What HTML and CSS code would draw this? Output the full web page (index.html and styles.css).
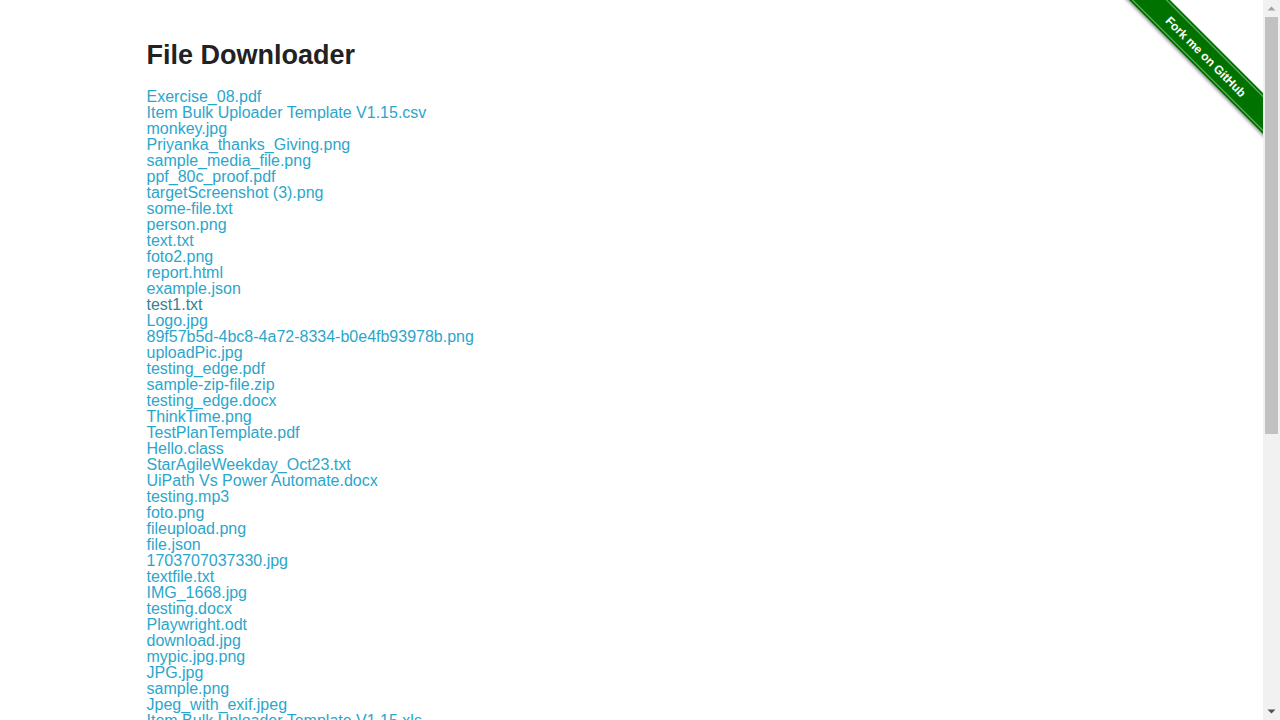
FILE: index.html
```html
<!DOCTYPE html>
<html lang="en">
<head>
<meta charset="utf-8">
<title>The Internet</title>
<link rel="stylesheet" href="styles.css">
</head>
<body>
<div class="page">
  <a class="ribbon-wrap" href="#"><span class="ribbon"><span class="ribbon-text">Fork me on GitHub</span></span></a>
  <div class="row">
    <div class="column">
      <h3 class="title">File Downloader</h3>
      <div class="files">
        <a href="#">Exercise_08.pdf</a>
        <a href="#">Item Bulk Uploader Template V1.15.csv</a>
        <a href="#">monkey.jpg</a>
        <a href="#">Priyanka_thanks_Giving.png</a>
        <a href="#">sample_media_file.png</a>
        <a href="#">ppf_80c_proof.pdf</a>
        <a href="#">targetScreenshot (3).png</a>
        <a href="#">some-file.txt</a>
        <a href="#">person.png</a>
        <a href="#">text.txt</a>
        <a href="#">foto2.png</a>
        <a href="#">report.html</a>
        <a href="#">example.json</a>
        <a href="#" class="visited">test1.txt</a>
        <a href="#">Logo.jpg</a>
        <a href="#">89f57b5d-4bc8-4a72-8334-b0e4fb93978b.png</a>
        <a href="#">uploadPic.jpg</a>
        <a href="#">testing_edge.pdf</a>
        <a href="#">sample-zip-file.zip</a>
        <a href="#">testing_edge.docx</a>
        <a href="#">ThinkTime.png</a>
        <a href="#">TestPlanTemplate.pdf</a>
        <a href="#">Hello.class</a>
        <a href="#">StarAgileWeekday_Oct23.txt</a>
        <a href="#">UiPath Vs Power Automate.docx</a>
        <a href="#">testing.mp3</a>
        <a href="#">foto.png</a>
        <a href="#">fileupload.png</a>
        <a href="#">file.json</a>
        <a href="#">1703707037330.jpg</a>
        <a href="#">textfile.txt</a>
        <a href="#">IMG_1668.jpg</a>
        <a href="#">testing.docx</a>
        <a href="#">Playwright.odt</a>
        <a href="#">download.jpg</a>
        <a href="#">mypic.jpg.png</a>
        <a href="#">JPG.jpg</a>
        <a href="#">sample.png</a>
        <a href="#">Jpeg_with_exif.jpeg</a>
        <a href="#">Item Bulk Uploader Template V1.15.xls</a>
        <a href="#">upload.txt</a>
        <a href="#">image.png</a>
        <a href="#">Screenshot_1.png</a>
        <a href="#">data.csv</a>
        <a href="#">sample.pdf</a>
        <a href="#">luminoslogo.png</a>
        <a href="#">testfile.txt</a>
        <a href="#">picture.jpg</a>
        <a href="#">document.docx</a>
        <a href="#">selenium.png</a>
        <a href="#">hello.txt</a>
        <a href="#">photo.jpeg</a>
        <a href="#">resume.pdf</a>
        <a href="#">test.xlsx</a>
        <a href="#">cat.jpg</a>
        <a href="#">demo.txt</a>
        <a href="#">file_example.png</a>
        <a href="#">newfile.txt</a>
        <a href="#">avatar.png</a>
        <a href="#">sample.json</a>
        <a href="#">menu.pdf</a>
        <a href="#">testdata.xml</a>
      </div>
    </div>
  </div>
  <div class="footer">
    <hr class="footer-rule">
    <div class="footer-text">Powered by <a href="#">Elemental Selenium</a></div>
  </div>
</div>
<div class="scrollbar" aria-hidden="true">
  <svg class="sb-arrow" width="17" height="17" viewBox="0 0 17 17"><polygon points="4.5,10.5 12.5,10.5 8.5,6.5" fill="#a3a3a3"/></svg>
  <div class="sb-track"><div class="sb-thumb"></div></div>
  <svg class="sb-arrow" width="17" height="17" viewBox="0 0 17 17"><polygon points="4.5,6.5 12.5,6.5 8.5,10.5" fill="#505050"/></svg>
</div>
</body>
</html>
```

FILE: styles.css
```css
html, body {
  margin: 0;
  padding: 0;
}

html {
  scrollbar-width: none;
}

body {
  font-family: "Helvetica Neue", Helvetica, "Liberation Sans", Arial, sans-serif;
  font-size: 16px;
  line-height: 1;
  color: #222222;
  background: #ffffff;
  padding-right: 17px;
}

.page {
  position: relative;
  display: flow-root;
}

.row {
  max-width: 1000px;
  margin: 0 auto;
}

.column {
  padding: 0 15px;
}

.title {
  font-size: 27px;
  font-weight: bold;
  line-height: 34px;
  margin: 38px 0 17px;
  color: #222222;
}

.files {
  display: flex;
  flex-direction: column;
  align-items: flex-start;
}

.files a {
  color: #2ba6cb;
  text-decoration: none;
  line-height: 16px;
  white-space: nowrap;
}

.files a.visited {
  color: #3a7f93;
}

.footer {
  max-width: 1000px;
  margin: 0 auto;
  padding: 0 15px 20px;
}

.footer-rule {
  border: 0;
  border-top: 1px solid #dddddd;
  margin: 20px 0 19px;
  height: 0;
}

.footer-text {
  text-align: center;
  font-size: 16px;
}

.footer-text a {
  color: #2ba6cb;
  text-decoration: none;
}

/* GitHub ribbon */
.ribbon-wrap {
  position: absolute;
  top: 0;
  right: 0;
  width: 149px;
  height: 149px;
  overflow: hidden;
  z-index: 5;
  text-decoration: none;
}

.ribbon {
  position: absolute;
  left: -18px;
  top: 42px;
  width: 220px;
  height: 29px;
  box-sizing: border-box;
  background: #007200;
  transform: rotate(45deg);
  display: flex;
  align-items: center;
  justify-content: center;
  box-shadow: -1px 2px 3px rgba(0, 0, 0, 0.35);
}

.ribbon::before,
.ribbon::after {
  content: "";
  position: absolute;
  left: 0;
  right: 0;
  height: 1px;
  background: rgba(255, 255, 255, 0.45);
}

.ribbon::before {
  top: 2px;
}

.ribbon::after {
  bottom: 2px;
}

.ribbon-text {
  color: #ffffff;
  font-family: "Liberation Sans", Arial, sans-serif;
  font-weight: bold;
  font-size: 12px;
  line-height: 1;
  white-space: nowrap;
}

/* imitation of the browser's vertical scrollbar */
.scrollbar {
  position: fixed;
  top: 0;
  right: 0;
  bottom: 0;
  width: 17px;
  background: #f1f1f1;
  display: flex;
  flex-direction: column;
  z-index: 10;
}

.sb-arrow {
  display: block;
  flex: none;
}

.sb-track {
  flex: 1;
  position: relative;
}

.sb-thumb {
  margin: 0 2px;
  height: 417px;
  background: #c1c1c1;
}
```
